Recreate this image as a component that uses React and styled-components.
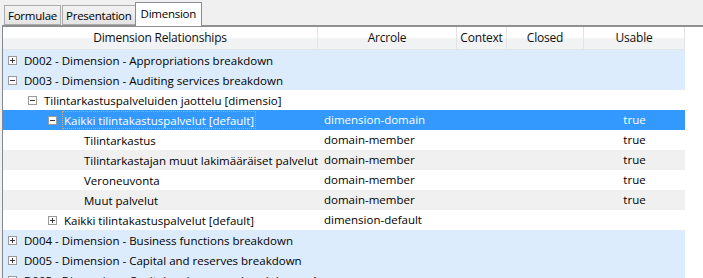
import styled, { createGlobalStyle } from "styled-components";

const GlobalStyle = createGlobalStyle`
  html, body {
    margin: 0;
    padding: 0;
    background: #f0f0f0;
  }
  body {
    font-family: "Open Sans", "Noto Sans", "Liberation Sans", sans-serif;
    font-size: 11.5px;
    color: #000;
  }
`;

const COLS = "315px 139px 50px 77px 101px";

const rows = [
  { level: 0, label: "D002 - Dimension - Appropriations breakdown", toggle: "plus", tone: "blue" },
  { level: 0, label: "D003 - Dimension - Auditing services breakdown", toggle: "minus", tone: "blue" },
  { level: 1, label: "Tilintarkastuspalveluiden jaottelu [dimensio]", toggle: "minus", tone: "white" },
  { level: 2, label: "Kaikki tilintakastuspalvelut [default]", toggle: "minus", tone: "selected", arcrole: "dimension-domain", usable: "true" },
  { level: 3, label: "Tilintarkastus", tone: "white", arcrole: "domain-member", usable: "true" },
  { level: 3, label: "Tilintarkastajan muut lakimääräiset palvelut", tone: "gray", arcrole: "domain-member", usable: "true" },
  { level: 3, label: "Veroneuvonta", tone: "white", arcrole: "domain-member", usable: "true" },
  { level: 3, label: "Muut palvelut", tone: "gray", arcrole: "domain-member", usable: "true" },
  { level: 2, label: "Kaikki tilintakastuspalvelut [default]", toggle: "plus", tone: "white", arcrole: "dimension-default" },
  { level: 0, label: "D004 - Dimension - Business functions breakdown", toggle: "plus", tone: "blue" },
  { level: 0, label: "D005 - Dimension - Capital and reserves breakdown", toggle: "plus", tone: "blue" },
  { level: 0, label: "D005 - Dimension - Capital and reserves breakdown - Auditor", toggle: "plus", tone: "blue" },
];

const toneBg = {
  blue: "#ddecfc",
  white: "#ffffff",
  gray: "#f0f0f0",
  selected: "#3399ff",
};

function Expander({ kind }) {
  return (
    <Box>
      <svg width="9" height="9" viewBox="0 0 9 9">
        <rect x="0.5" y="0.5" width="8" height="8" fill="#fdfdfd" stroke="#9a9a9a" />
        <line x1="2" y1="4.5" x2="7" y2="4.5" stroke="#3a3a3a" />
        {kind === "plus" && <line x1="4.5" y1="2" x2="4.5" y2="7" stroke="#3a3a3a" />}
      </svg>
    </Box>
  );
}

export default function App() {
  return (
    <>
      <GlobalStyle />
      <Page>
        <TabStrip>
          <Tab>Formulae</Tab>
          <Tab>Presentation</Tab>
          <Tab $active>Dimension</Tab>
        </TabStrip>
        <Panel>
          <Header>
            <HeadCell>Dimension Relationships</HeadCell>
            <HeadCell>Arcrole</HeadCell>
            <HeadCell>Context</HeadCell>
            <HeadCell>Closed</HeadCell>
            <HeadCell>Usable</HeadCell>
          </Header>
          {rows.map((r, i) => (
            <Row key={i} $tone={r.tone}>
              <TreeCell $level={r.level}>
                {r.toggle ? <Expander kind={r.toggle} /> : <Spacer />}
                <Label $focused={r.tone === "selected"}>{r.label}</Label>
              </TreeCell>
              <Cell>{r.arcrole}</Cell>
              <Cell />
              <Cell />
              <Cell $center>{r.usable}</Cell>
            </Row>
          ))}
        </Panel>
      </Page>
    </>
  );
}

const Page = styled.div`
  width: 703px;
  height: 278px;
  overflow: hidden;
  display: flex;
  flex-direction: column;
  background: #f0f0f0;
`;

const TabStrip = styled.div`
  flex: none;
  display: flex;
  align-items: flex-end;
  height: 25px;
  padding-left: 3px;
`;

const Tab = styled.div`
  box-sizing: border-box;
  height: ${(p) => (p.$active ? "24px" : "20px")};
  margin-bottom: ${(p) => (p.$active ? "-1px" : "0")};
  padding: ${(p) => (p.$active ? "2px 5px 0 5px" : "1px 3px 0 3px")};
  margin-left: ${(p) => (p.$active ? "-1px" : "1px")};
  background: ${(p) => (p.$active ? "#ffffff" : "linear-gradient(#f2f2f2, #e4e4e4)")};
  border: 1px solid ${(p) => (p.$active ? "#898c95" : "#acacac")};
  border-bottom: ${(p) => (p.$active ? "none" : "1px solid #acacac")};
  line-height: 17px;
  font-size: 11.5px;
  letter-spacing: -0.25px;
  position: relative;
  z-index: ${(p) => (p.$active ? 1 : 0)};
  white-space: nowrap;
`;

const Panel = styled.div`
  flex: 1;
  min-height: 0;
  margin-left: 2px;
  border-top: 2px solid #8e8f8f;
  border-left: 1px solid #828790;
  background: #ffffff;
`;

const Header = styled.div`
  display: grid;
  grid-template-columns: ${COLS};
  height: 23px;
  background: linear-gradient(#ffffff 0, #ffffff 45%, #f1f2f4 55%, #f1f2f4 100%);
  border-bottom: 1px solid #e3e4e6;
  width: 682px;
  box-sizing: border-box;
`;

const HeadCell = styled.div`
  display: flex;
  align-items: center;
  justify-content: center;
  border-right: 1px solid #e3e4e6;
  line-height: 22px;
  font-size: 12px;
  letter-spacing: -0.2px;
  color: #101010;
`;

const Row = styled.div`
  display: grid;
  grid-template-columns: ${COLS};
  width: 682px;
  height: 20px;
  line-height: 20px;
  background: ${(p) => toneBg[p.$tone]};
  color: ${(p) => (p.$tone === "selected" ? "#ffffff" : "#000000")};
`;

const TreeCell = styled.div`
  display: flex;
  align-items: center;
  padding-left: ${(p) => 5 + p.$level * 20}px;
  white-space: nowrap;
  overflow: hidden;
`;

const Box = styled.span`
  display: inline-flex;
  width: 9px;
  height: 9px;
  margin-right: 7px;
  flex: none;
`;

const Spacer = styled.span`
  width: 16px;
  flex: none;
`;

const Label = styled.span`
  box-sizing: border-box;
  height: 18px;
  line-height: 17px;
  padding: 0 1px;
  margin-left: -2px;
  border: 1px dotted ${(p) => (p.$focused ? "#d9a35c" : "transparent")};
`;

const Cell = styled.div`
  padding-left: ${(p) => (p.$center ? "0" : "6px")};
  text-align: ${(p) => (p.$center ? "center" : "left")};
  white-space: nowrap;
  overflow: hidden;
`;
